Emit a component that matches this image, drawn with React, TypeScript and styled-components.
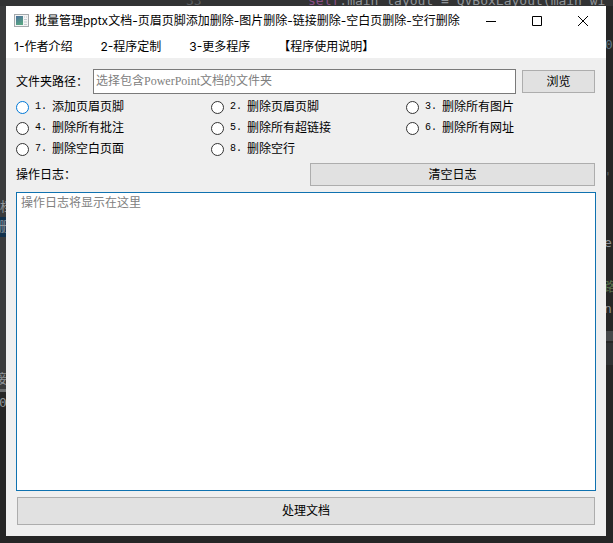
import React from "react";
import styled, { createGlobalStyle } from "styled-components";

const GlobalStyle = createGlobalStyle`
  * { box-sizing: border-box; }
  body { margin: 0; background: #262626; }
  button, input, textarea { font: inherit; color: inherit; }
`;

const Desktop = styled.div`
  position: relative;
  display: flex;
  min-height: 100vh;
  padding: 6px 7px 7px 6px;
  overflow: hidden;
  background: linear-gradient(90deg, #3a3b3c 0 6px, #262626 6px);
  font: 12px/16px "Liberation Sans", "Noto Sans CJK SC", sans-serif;
  color: #000;
`;

const EditorText = styled.span<{ $x: number; $y: number; $color?: string }>`
  position: absolute;
  left: ${(p) => p.$x}px;
  top: ${(p) => p.$y}px;
  font: 13px/16px "DejaVu Sans Mono", "Noto Sans CJK SC", monospace;
  color: ${(p) => p.$color || "#8f9498"};
  white-space: pre;
`;

const EditorBlock = styled.div<{ $side: "left" | "right"; $y: number; $h: number; $color: string }>`
  position: absolute;
  ${(p) => p.$side}: 0;
  top: ${(p) => p.$y}px;
  width: 7px;
  height: ${(p) => p.$h}px;
  background: ${(p) => p.$color};
`;

const TopStrip = styled.div`
  position: absolute;
  inset: 0 0 auto 0;
  height: 6px;
  background: #323334;
`;

const Keyword = styled.span`
  color: #8a4f86;
`;

const Window = styled.main`
  position: relative;
  flex: 1;
  display: flex;
  flex-direction: column;
  min-width: 0;
  background: #efefef;
`;

const TitleBar = styled.header`
  display: flex;
  align-items: center;
  height: 29px;
  padding-left: 8px;
  background: #fff;
`;

const Title = styled.h1`
  flex: 1;
  margin: 0 0 0 6px;
  font: 12px/16px "Inter", "Noto Sans CJK SC", sans-serif;
  white-space: nowrap;
`;

const WindowButton = styled.button`
  display: flex;
  align-items: center;
  justify-content: center;
  width: 46px;
  height: 29px;
  padding: 0;
  border: 0;
  background: none;
`;

const MenuBar = styled.nav`
  display: flex;
  align-items: center;
  gap: 28px;
  height: 23px;
  padding-left: 8px;
  background: #fff;
`;

const MenuItem = styled.button`
  padding: 0;
  border: 0;
  background: none;
  font: 12px/16px "Inter", "Noto Sans CJK SC", sans-serif;
  white-space: nowrap;
`;

const Content = styled.form`
  flex: 1;
  display: flex;
  flex-direction: column;
  gap: 6px;
  padding: 11px 10px;
`;

const Row = styled.div`
  display: flex;
  align-items: center;
`;

const LogHeader = styled.div`
  display: grid;
  grid-template-columns: 1fr 1fr;
  align-items: center;
  gap: 6px;
`;

const Label = styled.label`
  white-space: nowrap;
`;

const PathLabel = styled(Label)`
  width: 77px;
`;

const PathInput = styled.input`
  flex: 1;
  min-width: 0;
  height: 25px;
  padding: 0 2px;
  border: 1px solid #7a7a7a;
  outline: 0;
  background: #fff;
  font-family: "Liberation Serif", "Noto Sans CJK SC", serif;
  &::placeholder { color: #808080; opacity: 1; }
`;

const PushButton = styled.button`
  height: 23px;
  padding: 0;
  border: 1px solid #adadad;
  background: #e1e1e1;
`;

const BrowseButton = styled(PushButton)`
  width: 73px;
  margin: 0 1px 0 6px;
`;

const ClearButton = styled(PushButton)`
  margin: 0 1px;
`;

const RunButton = styled(PushButton)`
  height: 28px;
  margin: 0 1px;
`;

const Options = styled.fieldset`
  display: grid;
  grid-template-columns: 195px 195px 1fr;
  row-gap: 5px;
  margin: -1px 0 0;
  padding: 0;
  border: 0;
`;

const Option = styled.label`
  display: flex;
  align-items: center;
  height: 16px;
  white-space: nowrap;
`;

const Radio = styled.input<{ $hot: boolean }>`
  appearance: none;
  width: 13px;
  height: 13px;
  margin: 0 6px 0 0;
  border: 1px solid ${(p) => (p.$hot ? "#0078d7" : "#333")};
  border-radius: 50%;
  background: #fff;
  &:checked { box-shadow: inset 0 0 0 3px #fff; background: #333; }
`;

const OptionNumber = styled.span`
  width: 17px;
  font: 10px/16px "Liberation Mono", monospace;
`;

const Log = styled.textarea`
  flex: 1;
  min-height: 120px;
  padding: 2px 4px;
  border: 1px solid #0f72b0;
  outline: 0;
  resize: none;
  background: #fff;
  &::placeholder { color: #808080; opacity: 1; }
`;

const AppIcon = () => (
  <svg width="15" height="13" viewBox="0 0 15 13" aria-hidden="true">
    <defs>
      <linearGradient id="pane" x1="0" y1="0" x2="0.4" y2="1">
        <stop offset="0" stopColor="#4b6f9c" />
        <stop offset="1" stopColor="#57a383" />
      </linearGradient>
    </defs>
    <rect x="0.5" y="0.5" width="14" height="12" fill="#f4f4f4" stroke="#a4a9ac" />
    <rect x="2" y="2" width="7" height="9" fill="url(#pane)" />
    <path d="M10 3h1M12 3h1M10 5.5h3M10 8h3M10 10.5h3" stroke="#c3cbd0" />
  </svg>
);

const menus = ["1-作者介绍", "2-程序定制", "3-更多程序", "【程序使用说明】"];

const options = [
  "添加页眉页脚",
  "删除页眉页脚",
  "删除所有图片",
  "删除所有批注",
  "删除所有超链接",
  "删除所有网址",
  "删除空白页面",
  "删除空行",
];

export default function App() {
  return (
    <Desktop>
      <GlobalStyle />
      <TopStrip />
      <EditorText $x={186} $y={-7} $color="#5c6063">33</EditorText>
      <EditorText $x={308} $y={-7}>
        <Keyword>self</Keyword>.main_layout = QVBoxLayout(main_wi
      </EditorText>
      <EditorBlock $side="left" $y={217} $h={20} $color="#12314c" />
      <EditorText $x={0} $y={199}>档</EditorText>
      <EditorText $x={-1} $y={219}>删</EditorText>
      <EditorBlock $side="left" $y={389} $h={3} $color="#6a6c6d" />
      <EditorBlock $side="left" $y={392} $h={151} $color="#262626" />
      <EditorText $x={-6} $y={371}>接</EditorText>
      <EditorText $x={-1} $y={395}>0</EditorText>
      <EditorText $x={605} $y={37} $color="#5d7585">0</EditorText>
      <EditorText $x={604} $y={169} $color="#5c6063">'</EditorText>
      <EditorText $x={604} $y={235}>e</EditorText>
      <EditorText $x={603} $y={279} $color="#58704c">路</EditorText>
      <EditorText $x={604} $y={301}>n</EditorText>
      <EditorBlock $side="right" $y={331} $h={10} $color="#46484a" />
      <EditorBlock $side="right" $y={343} $h={22} $color="#303234" />
      <EditorBlock $side="right" $y={365} $h={178} $color="#262626" />

      <Window>
        <TitleBar>
          <AppIcon />
          <Title>批量管理pptx文档-页眉页脚添加删除-图片删除-链接删除-空白页删除-空行删除</Title>
          <WindowButton type="button" aria-label="最小化">
            <svg width="10" height="10" viewBox="0 0 10 10"><path d="M0 5.5h10" stroke="#000" /></svg>
          </WindowButton>
          <WindowButton type="button" aria-label="最大化">
            <svg width="10" height="10" viewBox="0 0 10 10"><path d="M.5.5h9v9h-9z" fill="none" stroke="#000" /></svg>
          </WindowButton>
          <WindowButton type="button" aria-label="关闭">
            <svg width="10" height="10" viewBox="0 0 10 10"><path d="M0 0l10 10M10 0L0 10" stroke="#000" /></svg>
          </WindowButton>
        </TitleBar>
        <MenuBar>
          {menus.map((m) => (
            <MenuItem key={m} type="button">{m}</MenuItem>
          ))}
        </MenuBar>
        <Content onSubmit={(e) => e.preventDefault()}>
          <Row>
            <PathLabel htmlFor="path">文件夹路径：</PathLabel>
            <PathInput id="path" placeholder="选择包含PowerPoint文档的文件夹" />
            <BrowseButton type="button">浏览</BrowseButton>
          </Row>
          <Options>
            {options.map((text, i) => (
              <Option key={text}>
                <Radio type="radio" name="action" $hot={i === 0} />
                <OptionNumber>{i + 1}.</OptionNumber>
                {text}
              </Option>
            ))}
          </Options>
          <LogHeader>
            <Label htmlFor="log">操作日志：</Label>
            <ClearButton type="button">清空日志</ClearButton>
          </LogHeader>
          <Log id="log" placeholder="操作日志将显示在这里" />
          <RunButton type="submit">处理文档</RunButton>
        </Content>
      </Window>
    </Desktop>
  );
}
